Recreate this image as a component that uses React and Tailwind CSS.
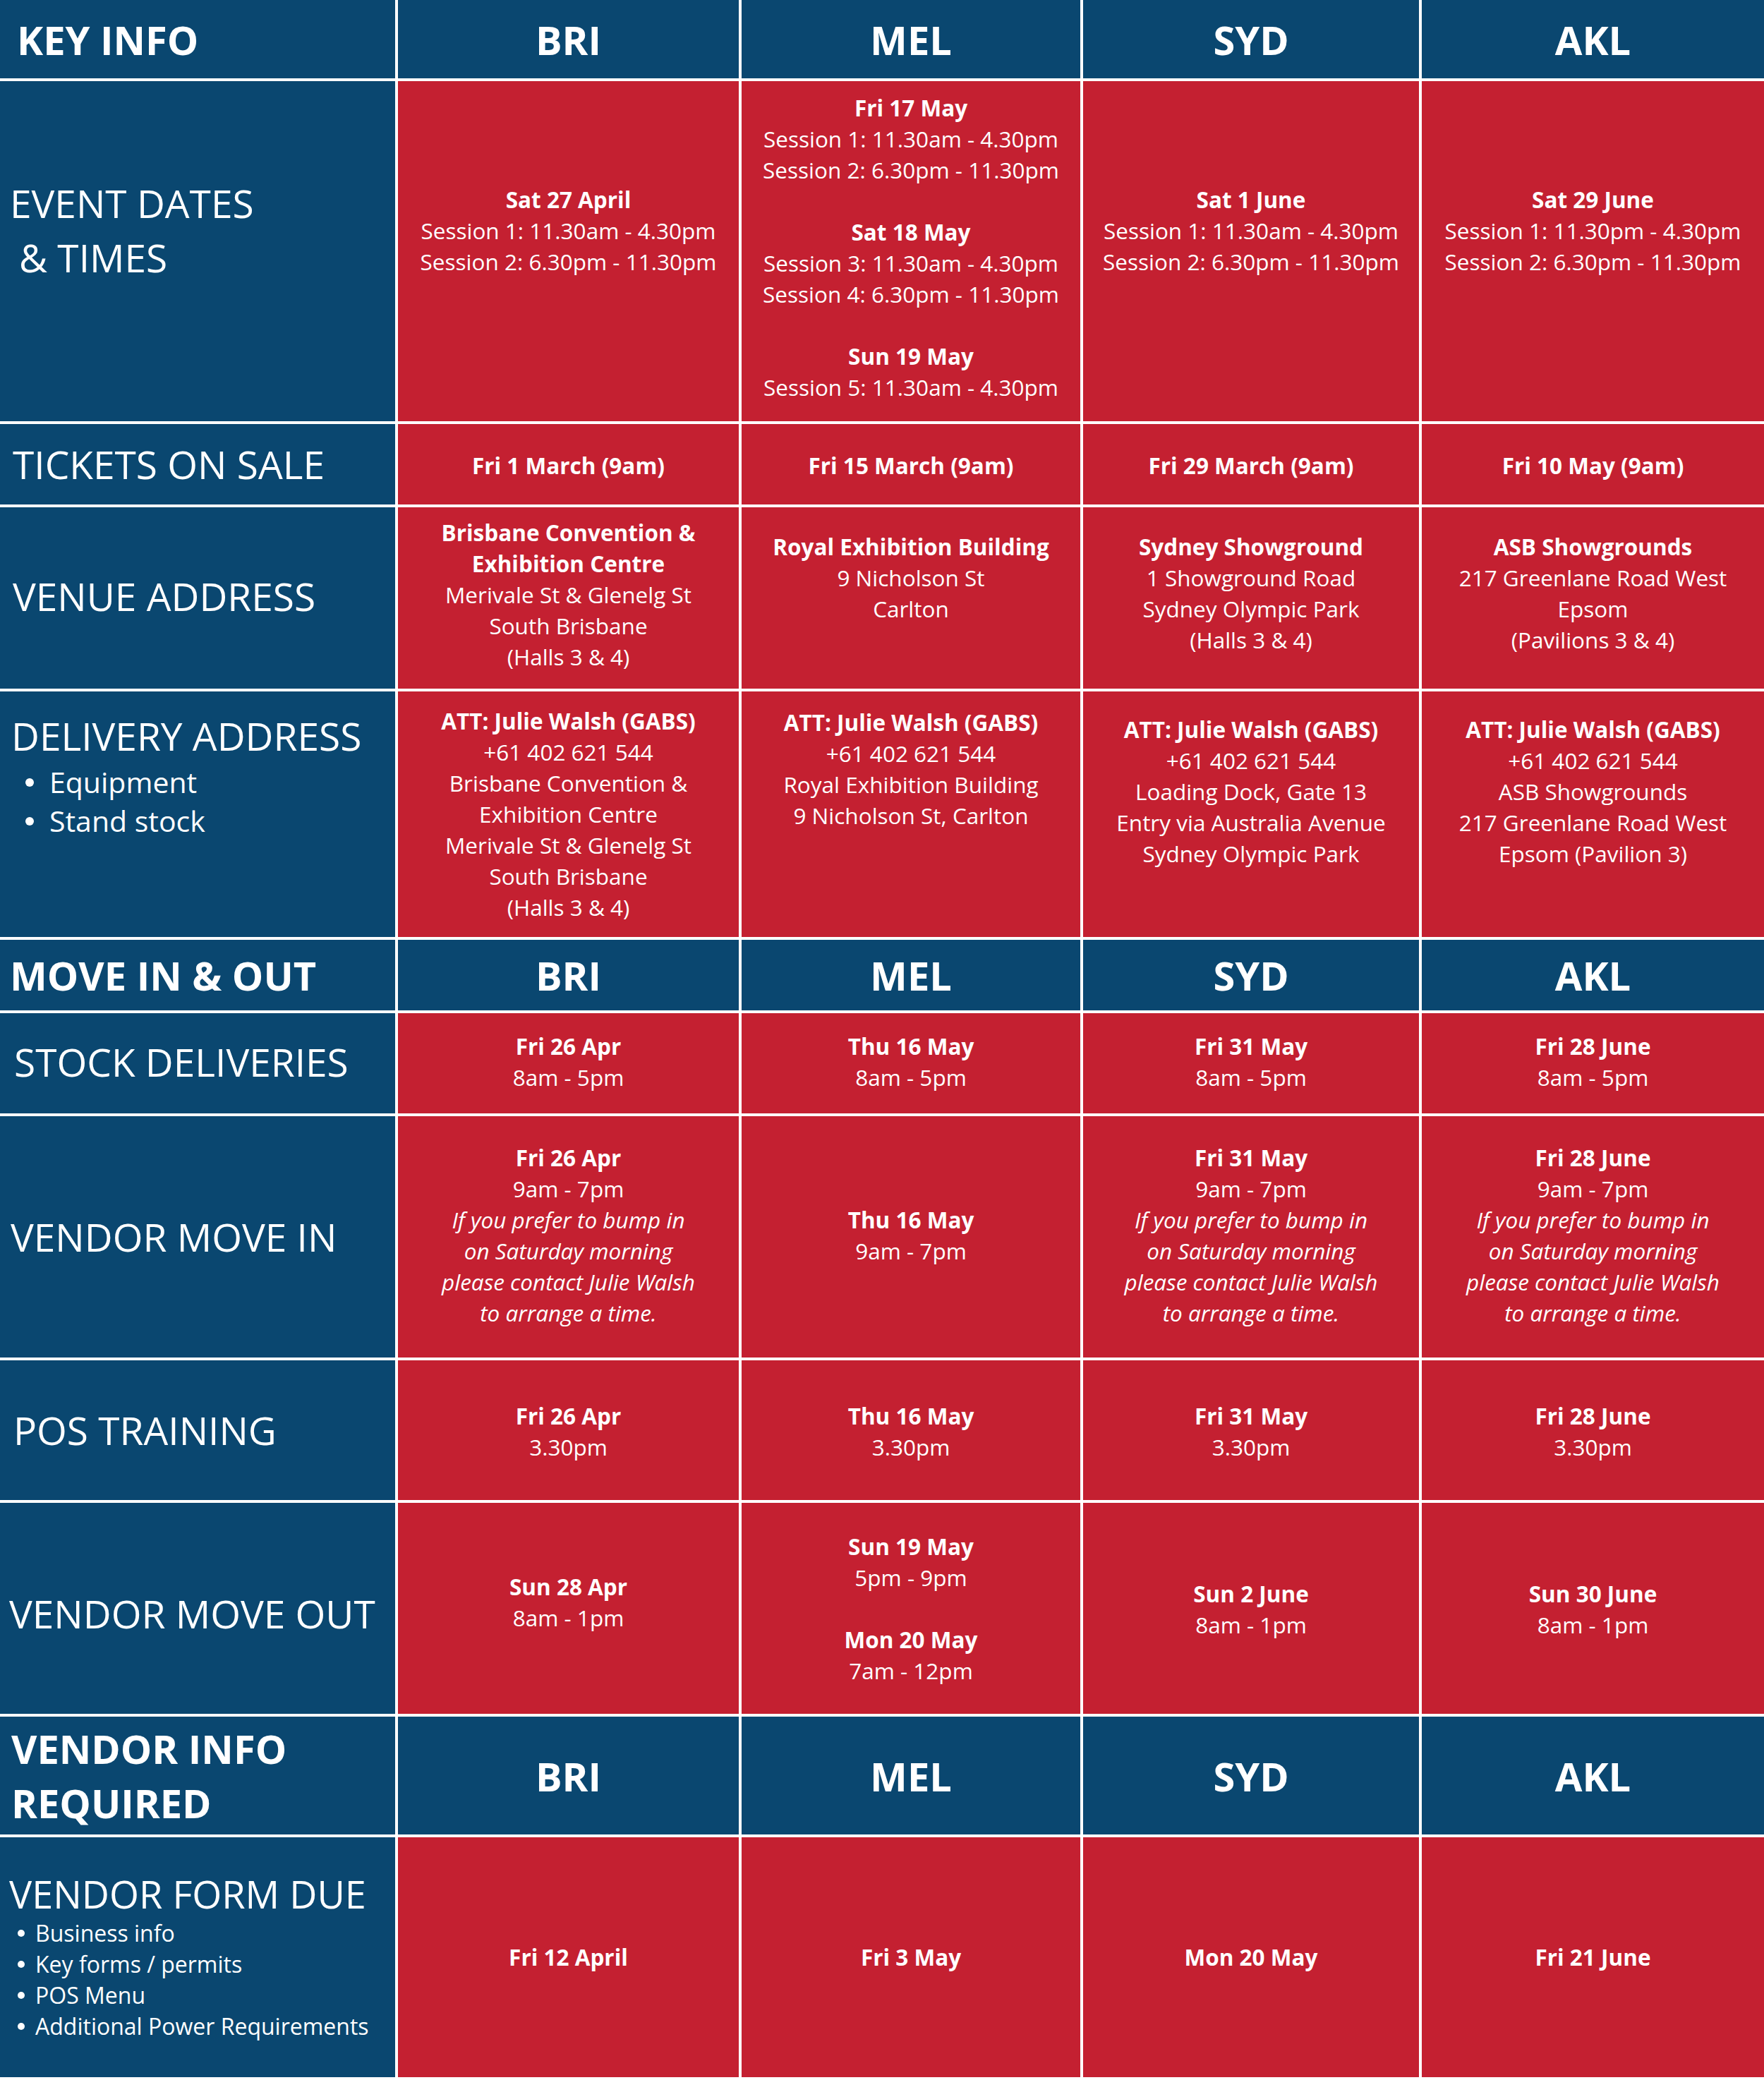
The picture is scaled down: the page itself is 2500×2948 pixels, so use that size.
const CITIES = ['BRI', 'MEL', 'SYD', 'AKL'];

// '*' = bold line, '_' = italic line, '' = blank line
const ROWS = [
  {
    kind: 'head',
    label: 'KEY INFO',
    labelClass: 'pl-[24px]',
  },
  {
    kind: 'data',
    label: (
      <div className="text-[55px] leading-[77px]">
        <div>EVENT DATES</div>
        <div className="pl-[13px]">&amp; TIMES</div>
      </div>
    ),
    labelClass: 'pl-[14px] pb-[60px]',
    cells: [
      { lines: ['*Sat 27 April', 'Session 1: 11.30am - 4.30pm', 'Session 2: 6.30pm - 11.30pm'], cls: 'pb-[58px]' },
      {
        lines: [
          '*Fri 17 May', 'Session 1: 11.30am - 4.30pm', 'Session 2: 6.30pm - 11.30pm', '',
          '*Sat 18 May', 'Session 3: 11.30am - 4.30pm', 'Session 4: 6.30pm - 11.30pm', '',
          '*Sun 19 May', 'Session 5: 11.30am - 4.30pm',
        ],
        cls: 'pb-[10px]',
      },
      { lines: ['*Sat 1 June', 'Session 1: 11.30am - 4.30pm', 'Session 2: 6.30pm - 11.30pm'], cls: 'pb-[58px]' },
      { lines: ['*Sat 29 June', 'Session 1: 11.30pm - 4.30pm', 'Session 2: 6.30pm - 11.30pm'], cls: 'pb-[58px]' },
    ],
  },
  {
    kind: 'data',
    label: <div className="text-[55px] leading-[70px]">TICKETS ON SALE</div>,
    labelClass: 'pl-[18px]',
    cells: [
      { lines: ['*Fri 1 March (9am)'], cls: 'pt-[4px]' },
      { lines: ['*Fri 15 March (9am)'], cls: 'pt-[4px]' },
      { lines: ['*Fri 29 March (9am)'], cls: 'pt-[4px]' },
      { lines: ['*Fri 10 May (9am)'], cls: 'pt-[4px]' },
    ],
  },
  {
    kind: 'data',
    label: <div className="text-[55px] leading-[70px]">VENUE ADDRESS</div>,
    labelClass: 'pl-[18px] pb-[6px]',
    cells: [
      { lines: ['*Brisbane Convention &', '*Exhibition Centre', 'Merivale St & Glenelg St', 'South Brisbane', '(Halls 3 & 4)'], cls: 'pb-[10px]' },
      { lines: ['*Royal Exhibition Building', '9 Nicholson St', 'Carlton'], top: 'pt-[34px]' },
      { lines: ['*Sydney Showground', '1 Showground Road', 'Sydney Olympic Park', '(Halls 3 & 4)'], top: 'pt-[34px]' },
      { lines: ['*ASB Showgrounds', '217 Greenlane Road West', 'Epsom', '(Pavilions 3 & 4)'], top: 'pt-[34px]' },
    ],
  },
  {
    kind: 'data',
    label: (
      <div>
        <div className="text-[55px] leading-[77px]">DELIVERY ADDRESS</div>
        <ul className="text-[41px] leading-[55px]">
          {['Equipment', 'Stand stock'].map((t) => (
            <li key={t} className="flex items-center">
              <span className="ml-[20px] mr-[22px] h-[12px] w-[12px] rounded-full bg-white" />
              {t}
            </li>
          ))}
        </ul>
      </div>
    ),
    labelClass: 'pl-[16px] justify-start pt-[24px]',
    cells: [
      { lines: ['*ATT: Julie Walsh (GABS)', '+61 402 621 544', 'Brisbane Convention &', 'Exhibition Centre', 'Merivale St & Glenelg St', 'South Brisbane', '(Halls 3 & 4)'] },
      { lines: ['*ATT: Julie Walsh (GABS)', '+61 402 621 544', 'Royal Exhibition Building', '9 Nicholson St, Carlton'], top: 'pt-[22px]' },
      { lines: ['*ATT: Julie Walsh (GABS)', '+61 402 621 544', 'Loading Dock, Gate 13', 'Entry via Australia Avenue', 'Sydney Olympic Park'], top: 'pt-[32px]' },
      { lines: ['*ATT: Julie Walsh (GABS)', '+61 402 621 544', 'ASB Showgrounds', '217 Greenlane Road West', 'Epsom (Pavilion 3)'], top: 'pt-[32px]' },
    ],
  },
  {
    kind: 'head',
    label: 'MOVE IN & OUT',
    labelClass: 'pl-[14px]',
  },
  {
    kind: 'data',
    label: <div className="text-[55px] leading-[70px]">STOCK DELIVERIES</div>,
    labelClass: 'pl-[20px] pb-[4px]',
    cells: [
      { lines: ['*Fri 26 Apr', '8am - 5pm'], cls: 'pb-[4px]' },
      { lines: ['*Thu 16 May', '8am - 5pm'], cls: 'pb-[4px]' },
      { lines: ['*Fri 31 May', '8am - 5pm'], cls: 'pb-[4px]' },
      { lines: ['*Fri 28 June', '8am - 5pm'], cls: 'pb-[4px]' },
    ],
  },
  {
    kind: 'data',
    label: <div className="text-[55px] leading-[70px]">VENDOR MOVE IN</div>,
    labelClass: 'pl-[15px]',
    cells: [
      { lines: ['*Fri 26 Apr', '9am - 7pm', '_If you prefer to bump in', '_on Saturday morning', '_please contact Julie Walsh', '_to arrange a time.'], cls: 'pb-[4px]' },
      { lines: ['*Thu 16 May', '9am - 7pm'], cls: 'pb-[4px]' },
      { lines: ['*Fri 31 May', '9am - 7pm', '_If you prefer to bump in', '_on Saturday morning', '_please contact Julie Walsh', '_to arrange a time.'], cls: 'pb-[4px]' },
      { lines: ['*Fri 28 June', '9am - 7pm', '_If you prefer to bump in', '_on Saturday morning', '_please contact Julie Walsh', '_to arrange a time.'], cls: 'pb-[4px]' },
    ],
  },
  {
    kind: 'data',
    label: <div className="text-[55px] leading-[70px]">POS TRAINING</div>,
    labelClass: 'pl-[19px]',
    cells: [
      { lines: ['*Fri 26 Apr', '3.30pm'], cls: 'pt-[4px]' },
      { lines: ['*Thu 16 May', '3.30pm'], cls: 'pt-[4px]' },
      { lines: ['*Fri 31 May', '3.30pm'], cls: 'pt-[4px]' },
      { lines: ['*Fri 28 June', '3.30pm'], cls: 'pt-[4px]' },
    ],
  },
  {
    kind: 'data',
    label: <div className="text-[55px] leading-[70px]">VENDOR MOVE OUT</div>,
    labelClass: 'pl-[13px] pt-[14px]',
    cells: [
      { lines: ['*Sun 28 Apr', '8am - 1pm'], cls: 'pb-[18px]' },
      { lines: ['*Sun 19 May', '5pm - 9pm', '', '*Mon 20 May', '7am - 12pm'] },
      { lines: ['*Sun 2 June', '8am - 1pm'], cls: 'pt-[2px]' },
      { lines: ['*Sun 30 June', '8am - 1pm'], cls: 'pt-[2px]' },
    ],
  },
  {
    kind: 'head',
    label: (
      <>
        VENDOR INFO
        <br />
        REQUIRED
      </>
    ),
    labelClass: 'pl-[16px]',
    labelLeading: 'leading-[77px]',
  },
  {
    kind: 'data',
    label: (
      <div>
        <div className="text-[54px] leading-[68px]">VENDOR FORM DUE</div>
        <ul className="text-[32px] leading-[44px]">
          {['Business info', 'Key forms / permits', 'POS Menu', 'Additional Power Requirements'].map((t) => (
            <li key={t} className="flex items-center">
              <span className="ml-[12px] mr-[15px] h-[10px] w-[10px] rounded-full bg-white" />
              {t}
            </li>
          ))}
        </ul>
      </div>
    ),
    labelClass: 'pl-[13px] pb-[4px]',
    cells: [
      { lines: ['*Fri 12 April'] },
      { lines: ['*Fri 3 May'] },
      { lines: ['*Mon 20 May'] },
      { lines: ['*Fri 21 June'] },
    ],
  },
];

function Line({ text }) {
  if (text === '') return <div className="h-[44px]" />;
  if (text.startsWith('*')) return <div className="font-bold">{text.slice(1)}</div>;
  if (text.startsWith('_')) return <div className="italic">{text.slice(1)}</div>;
  return <div>{text}</div>;
}

function DataCell({ cell }) {
  return (
    <div
      className={`flex flex-col items-center bg-[#c42031] text-center text-[31.5px] leading-[44px] text-white ${
        cell.top ? `justify-start ${cell.top}` : 'justify-center'
      } ${cell.cls || ''}`}
    >
      {cell.lines.map((l, i) => (
        <Line key={i} text={l} />
      ))}
    </div>
  );
}

export default function App() {
  return (
    <div className="w-[2500px] bg-white pb-[4px] font-['Open_Sans',sans-serif] text-white">
      <div className="grid grid-cols-[560px_483px_480px_476px_485px] grid-rows-[111px_482px_114px_257px_348px_100px_142px_342px_198px_299px_167px_340px] gap-[4px]">
        {ROWS.map((row, r) =>
          row.kind === 'head' ? (
            [
              <div
                key={`${r}-l`}
                className={`flex items-center bg-[#0a4770] text-[56px] font-bold ${row.labelLeading || 'leading-[70px]'} ${row.labelClass}`}
              >
                <div>{row.label}</div>
              </div>,
              ...CITIES.map((c) => (
                <div
                  key={`${r}-${c}`}
                  className="flex items-center justify-center bg-[#0a4770] text-[56px] font-bold leading-[70px]"
                >
                  {c}
                </div>
              )),
            ]
          ) : (
            [
              <div key={`${r}-l`} className={`flex flex-col justify-center bg-[#0a4770] ${row.labelClass}`}>
                {row.label}
              </div>,
              ...row.cells.map((cell, i) => <DataCell key={`${r}-${i}`} cell={cell} />),
            ]
          )
        )}
      </div>
    </div>
  );
}
